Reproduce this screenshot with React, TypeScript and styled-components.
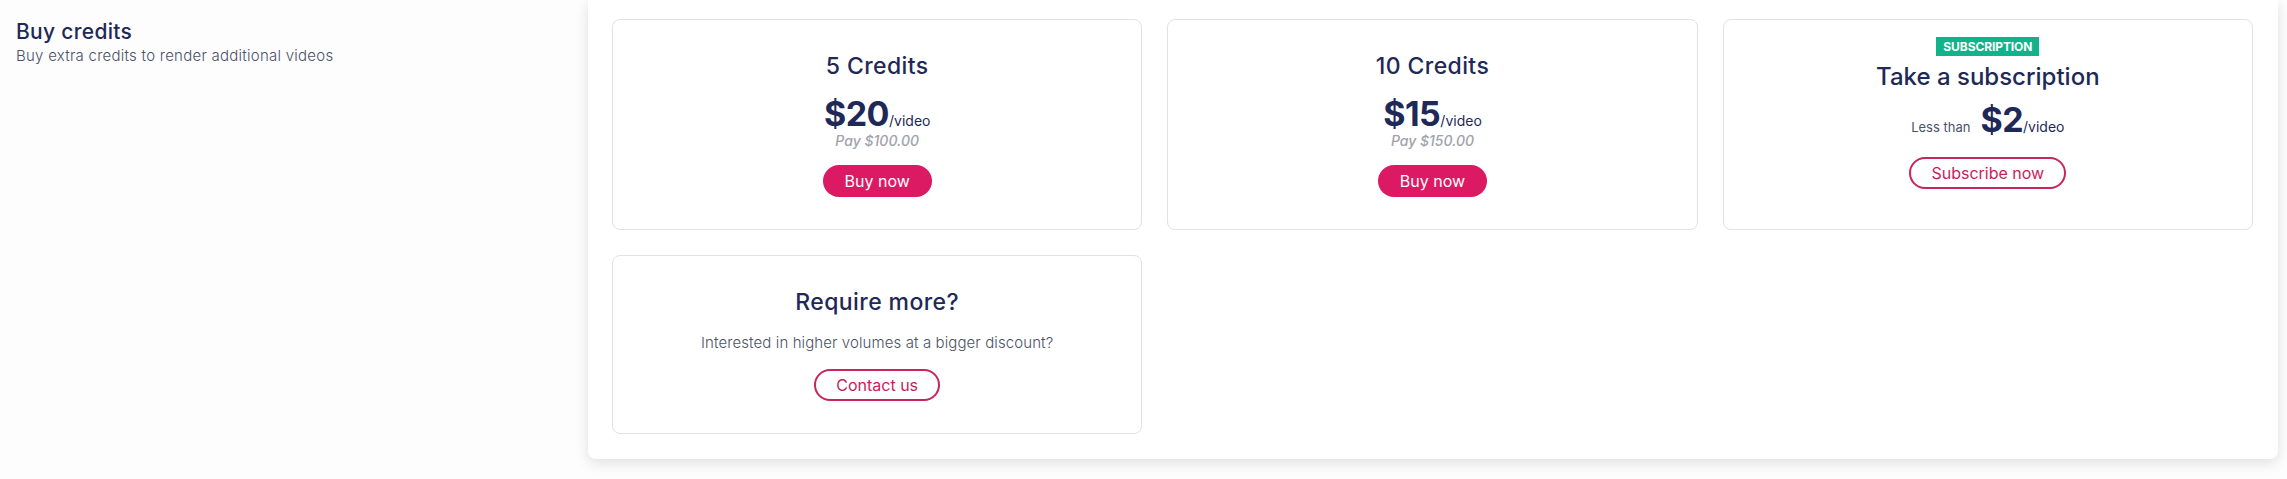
import React from 'react';
import styled, { createGlobalStyle } from 'styled-components';

const GlobalStyle = createGlobalStyle`
  html, body {
    margin: 0;
    padding: 0;
    background: #fdfdfd;
    font-family: Inter, "Noto Sans", sans-serif;
    color: #1e2957;
  }
  * {
    box-sizing: border-box;
  }
`;

const Page = styled.div`
  display: grid;
  grid-template-columns: 572px 1fr;
  padding: 0 9px 0 16px;
  width: 2287px;
  height: 479px;
  overflow: hidden;
`;

const Intro = styled.div`
  padding-top: 18px;
`;

const Title = styled.h2`
  margin: 0;
  font-size: 21px;
  line-height: 28px;
  font-weight: 500;
  letter-spacing: 0.3px;
  color: #1e2957;
`;

const Subtitle = styled.p`
  margin: 0;
  font-size: 15px;
  line-height: 20px;
  font-weight: 300;
  letter-spacing: 0.25px;
  color: #4b5168;
`;

const Panel = styled.div`
  align-self: start;
  background: #fff;
  border-radius: 0 0 8px 8px;
  box-shadow: 0 4px 14px rgba(0, 0, 0, 0.12);
  padding: 19px 25px 25px 24px;
  display: grid;
  grid-template-columns: repeat(3, 1fr);
  gap: 25px;
`;

const Card = styled.div<{ $top?: number }>`
  display: flex;
  flex-direction: column;
  align-items: center;
  border: 1px solid #e2e2e4;
  border-radius: 8px;
  padding: ${p => p.$top ?? 32}px 24px 32px;
  text-align: center;
`;

const CardTitle = styled.h3<{ $large?: boolean }>`
  margin: 0;
  font-size: ${p => (p.$large ? 24 : 23)}px;
  line-height: ${p => (p.$large ? 30 : 28)}px;
  letter-spacing: ${p => (p.$large ? 0 : 0.4)}px;
  font-weight: 500;
  color: #1e2957;
`;

const Badge = styled.span`
  display: inline-flex;
  align-items: center;
  height: 19px;
  padding: 0 7px;
  background: #10b38a;
  color: #fff;
  font-size: 12px;
  font-weight: 700;
  text-transform: uppercase;
  letter-spacing: -0.1px;
  margin-bottom: 6px;
`;

const PriceRow = styled.div<{ $gap?: number }>`
  display: flex;
  align-items: baseline;
  justify-content: center;
  height: 36px;
  margin-top: ${p => p.$gap ?? 16}px;
  line-height: 36px;
`;

const Amount = styled.span`
  font-size: 34px;
  font-weight: 700;
  color: #1e2957;
  letter-spacing: -0.5px;
`;

const Unit = styled.span`
  font-size: 14px;
  line-height: 14px;
  font-weight: 400;
  color: #1e2957;
`;

const Prefix = styled.span`
  font-size: 13px;
  line-height: 13px;
  font-weight: 400;
  color: #4b5168;
  margin-right: 10px;
`;

const Total = styled.div`
  font-size: 14px;
  line-height: 18px;
  font-style: italic;
  font-weight: 500;
  color: #a0a3ab;
`;

const Text = styled.p`
  margin: 16px 0 0;
  font-size: 15px;
  line-height: 22px;
  font-weight: 300;
  letter-spacing: 0.1px;
  color: #4b5168;
`;

const Button = styled.button<{ $outline?: boolean; $gap?: number }>`
  height: 32px;
  margin-top: ${p => p.$gap ?? 15}px;
  padding: 0 ${p => (p.$outline ? 20 : 22)}px;
  border-radius: 16px;
  font-family: inherit;
  font-size: 16px;
  font-weight: 400;
  cursor: pointer;
  background: ${p => (p.$outline ? '#fff' : '#db1a63')};
  color: ${p => (p.$outline ? '#c81d5c' : '#fff')};
  border: ${p => (p.$outline ? '2px solid #c8245d' : '0')};
`;

type Offer = { credits: number; price: number; total: string };

const offers: Offer[] = [
  { credits: 5, price: 20, total: '$100.00' },
  { credits: 10, price: 15, total: '$150.00' },
];

const App = () => (
  <>
    <GlobalStyle />
    <Page>
      <Intro>
        <Title>Buy credits</Title>
        <Subtitle>Buy extra credits to render additional videos</Subtitle>
      </Intro>
      <Panel>
        {offers.map(o => (
          <Card key={o.credits}>
            <CardTitle>{o.credits} Credits</CardTitle>
            <PriceRow>
              <Amount>${o.price}</Amount>
              <Unit>/video</Unit>
            </PriceRow>
            <Total>Pay {o.total}</Total>
            <Button>Buy now</Button>
          </Card>
        ))}
        <Card $top={17}>
          <Badge>Subscription</Badge>
          <CardTitle $large>Take a subscription</CardTitle>
          <PriceRow $gap={10}>
            <Prefix>Less than</Prefix>
            <Amount>$2</Amount>
            <Unit>/video</Unit>
          </PriceRow>
          <Button $outline $gap={19}>Subscribe now</Button>
        </Card>
        <Card>
          <CardTitle>Require more?</CardTitle>
          <Text>Interested in higher volumes at a bigger discount?</Text>
          <Button $outline>Contact us</Button>
        </Card>
      </Panel>
    </Page>
  </>
);

export default App;
